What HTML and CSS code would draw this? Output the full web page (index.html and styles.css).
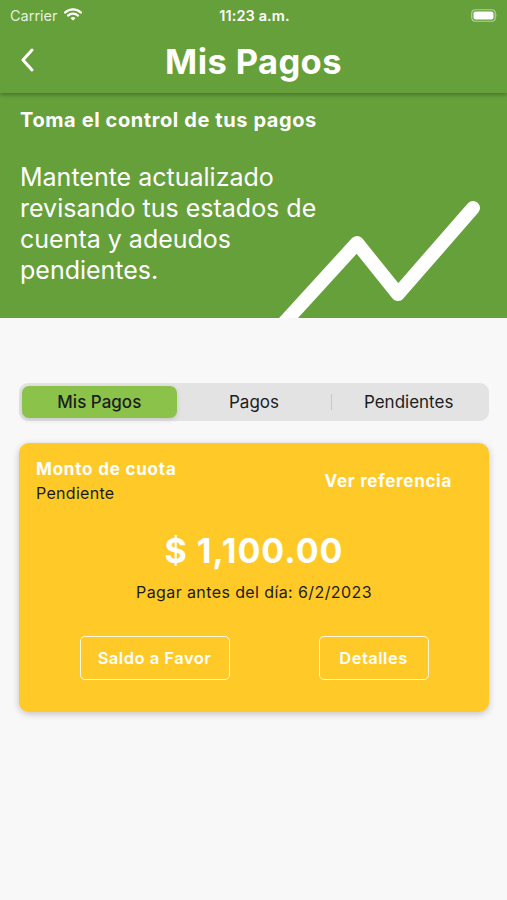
FILE: index.html
```html
<!DOCTYPE html>
<html lang="es">
<head>
<meta charset="utf-8">
<title>Mis Pagos</title>
<link rel="stylesheet" href="styles.css">
</head>
<body>
<div class="top">
  <div class="statusbar">
    <div class="sb-left">
      <span class="carrier">Carrier</span>
      <svg class="wifi" width="18" height="13" viewBox="0 0 18 13">
        <path d="M1 4.6 A11.5 11.5 0 0 1 17 4.6" fill="none" stroke="#fff" stroke-width="2.2" stroke-linecap="round"/>
        <path d="M4 7.6 A7.2 7.2 0 0 1 14 7.6" fill="none" stroke="#fff" stroke-width="2.2" stroke-linecap="round"/>
        <path d="M6.6 10.3 L9 12.6 L11.4 10.3 A3.4 3.4 0 0 0 6.6 10.3 Z" fill="#fff"/>
      </svg>
    </div>
    <div class="time">11:23 a.m.</div>
    <div class="sb-right">
      <svg width="28" height="13" viewBox="0 0 28 13">
        <rect x="0.75" y="0.75" width="23.5" height="11.5" rx="3.5" fill="none" stroke="rgba(255,255,255,0.5)" stroke-width="1.2"/>
        <rect x="2.5" y="2.5" width="20" height="8" rx="2" fill="#fff"/>
        <path d="M25.6 4.3 Q27.3 6.5 25.6 8.7 Z" fill="rgba(255,255,255,0.5)"/>
      </svg>
    </div>
  </div>
  <div class="navbar">
    <svg class="back" width="14" height="24" viewBox="0 0 14 24">
      <path d="M12 2 L3 12 L12 22" fill="none" stroke="#fff" stroke-width="3" stroke-linecap="round" stroke-linejoin="round"/>
    </svg>
    <h1 class="title">Mis Pagos</h1>
  </div>
</div>

<section class="banner">
  <h2 class="banner-title">Toma el control de tus pagos</h2>
  <p class="banner-text">Mantente actualizado revisando tus estados de cuenta y adeudos pendientes.</p>
  <svg class="trend" width="507" height="225" viewBox="0 0 507 225">
    <polyline points="284,230 357,150 398,201 473,115" fill="none" stroke="#fff" stroke-width="14" stroke-linecap="round" stroke-linejoin="round"/>
  </svg>
</section>

<main class="content">
  <div class="segmented">
    <div class="seg seg-active">Mis Pagos</div>
    <div class="seg">Pagos</div>
    <div class="seg seg-divided">Pendientes</div>
  </div>

  <div class="card">
    <div class="card-head">
      <div class="card-head-left">
        <div class="card-label">Monto de cuota</div>
        <div class="card-status">Pendiente</div>
      </div>
      <div class="card-link">Ver referencia</div>
    </div>
    <div class="amount">$ 1,100.00</div>
    <div class="due">Pagar antes del día: 6/2/2023</div>
    <div class="actions">
      <button class="btn btn-wide">Saldo a Favor</button>
      <button class="btn">Detalles</button>
    </div>
  </div>
</main>
</body>
</html>
```

FILE: styles.css
```css
* { box-sizing: border-box; }

body {
  margin: 0;
  width: 507px;
  min-height: 900px;
  background: #f8f8f8;
  font-family: Inter, "Noto Sans", sans-serif;
  color: #1b1b1b;
}

.top {
  background: #66a03b;
  position: relative;
  z-index: 2;
  box-shadow: 0 2px 4px rgba(0, 0, 0, 0.28);
}

.statusbar {
  height: 30px;
  display: grid;
  grid-template-columns: 1fr auto 1fr;
  align-items: center;
  padding: 0 8px 0 10px;
  color: #fff;
}

.sb-left {
  display: flex;
  align-items: center;
  gap: 6px;
}

.carrier {
  font-size: 14.5px;
  color: rgba(255, 255, 255, 0.85);
}

.wifi { margin-top: -2px; }

.time {
  font-size: 14.5px;
  font-weight: 600;
  letter-spacing: 0.1px;
}

.sb-right {
  display: flex;
  justify-content: flex-end;
}

.navbar {
  height: 63px;
  display: flex;
  align-items: center;
  justify-content: center;
  position: relative;
}

.back {
  position: absolute;
  left: 20px;
  top: 18px;
}

.title {
  margin: 0;
  color: #fff;
  font-size: 34.5px;
  font-weight: 700;
  letter-spacing: 0.4px;
}

.banner {
  position: relative;
  overflow: hidden;
  height: 225px;
  background: #66a03b;
  padding: 15px 20px 0;
  color: #fff;
}

.banner-title {
  margin: 0;
  font-size: 20px;
  font-weight: 700;
  line-height: 24px;
  letter-spacing: 0.6px;
}

.banner-text {
  position: relative;
  z-index: 1;
  margin: 30px 0 0;
  width: 320px;
  font-size: 25px;
  font-weight: 400;
  line-height: 31px;
}

.trend {
  position: absolute;
  left: 0;
  top: 0;
}

.content {
  padding: 65px 18px 0 19px;
}

.segmented {
  height: 38px;
  background: #e3e3e3;
  border-radius: 9px;
  padding: 3px;
  display: grid;
  grid-template-columns: 1fr 1fr 1fr;
}

.seg {
  display: flex;
  align-items: center;
  justify-content: center;
  font-size: 17px;
  color: #1c1c1c;
  position: relative;
}

.seg-active {
  background: #8bc34a;
  border-radius: 7px;
  font-weight: 500;
  box-shadow: 0 2px 5px rgba(0, 0, 0, 0.12);
}

.seg-divided::before {
  content: "";
  position: absolute;
  left: 0;
  top: 8px;
  bottom: 8px;
  width: 1px;
  background: #c9c9c9;
}

.card {
  margin-top: 22px;
  height: 269px;
  background: #ffca28;
  border-radius: 10px;
  box-shadow: 0 2px 7px rgba(0, 0, 0, 0.22);
  padding: 14px 0 0 17px;
}

.card-head {
  display: flex;
  justify-content: space-between;
  align-items: center;
  padding-right: 37px;
}

.card-label {
  color: #fff;
  font-size: 17px;
  font-weight: 700;
  line-height: 24px;
  letter-spacing: 0.8px;
}

.card-status {
  font-size: 16px;
  line-height: 24px;
  letter-spacing: 0.3px;
  color: #1b1b1b;
}

.card-link {
  color: #fff;
  font-size: 17px;
  font-weight: 700;
  letter-spacing: 0.7px;
}

.amount {
  margin-top: 26px;
  margin-left: -17px;
  text-align: center;
  color: #fff;
  font-size: 34px;
  font-weight: 700;
  line-height: 40px;
  letter-spacing: 1px;
}

.due {
  margin-top: 10px;
  margin-left: -17px;
  text-align: center;
  font-size: 16px;
  line-height: 22px;
  letter-spacing: 0.4px;
  color: #1b1b1b;
}

.actions {
  margin-top: 33px;
  margin-left: -17px;
  display: flex;
  justify-content: center;
  gap: 89px;
}

.btn {
  height: 44px;
  width: 110px;
  background: transparent;
  border: 1.5px solid rgba(255, 255, 255, 0.85);
  border-radius: 5px;
  color: #fff;
  font-family: inherit;
  font-size: 16.5px;
  font-weight: 600;
  letter-spacing: 0.5px;
  padding: 0;
}

.btn-wide { width: 150px; }
```
